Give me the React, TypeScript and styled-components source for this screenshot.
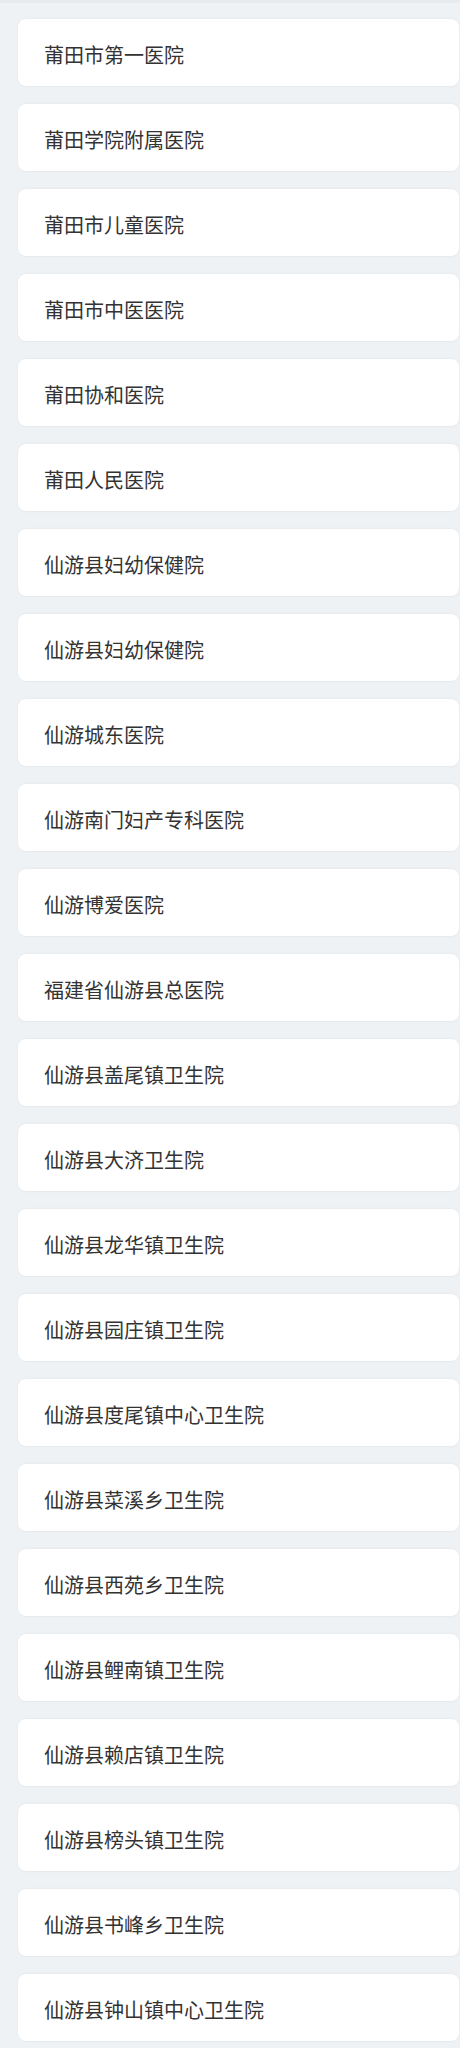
import React from "react";
import styled, { createGlobalStyle } from "styled-components";

const hospitals: string[] = [
    "莆田市第一医院",
    "莆田学院附属医院",
    "莆田市儿童医院",
    "莆田市中医医院",
    "莆田协和医院",
    "莆田人民医院",
    "仙游县妇幼保健院",
    "仙游县妇幼保健院",
    "仙游城东医院",
    "仙游南门妇产专科医院",
    "仙游博爱医院",
    "福建省仙游县总医院",
    "仙游县盖尾镇卫生院",
    "仙游县大济卫生院",
    "仙游县龙华镇卫生院",
    "仙游县园庄镇卫生院",
    "仙游县度尾镇中心卫生院",
    "仙游县菜溪乡卫生院",
    "仙游县西苑乡卫生院",
    "仙游县鲤南镇卫生院",
    "仙游县赖店镇卫生院",
    "仙游县榜头镇卫生院",
    "仙游县书峰乡卫生院",
    "仙游县钟山镇中心卫生院",
];

const GlobalStyle = createGlobalStyle`
    html, body {
        margin: 0;
        padding: 0;
        background: #eef2f5;
    }
    body {
        font-family: "Noto Sans CJK SC", "Noto Sans", sans-serif;
    }
`;

export default function App() {
    return (
        <>
            <GlobalStyle />
            <Page>
                <TopStrip />
                <List>
                    {hospitals.map((name, i) => (
                        <Card key={i}>
                            <Name>{name}</Name>
                        </Card>
                    ))}
                </List>
            </Page>
        </>
    );
}

const Page = styled.div`
    width: 460px;
    min-height: 2048px;
    background: #eef2f5;
`;

const TopStrip = styled.div`
    height: 3px;
    background: #e7ebee;
`;

const List = styled.ul`
    list-style: none;
    margin: 0;
    padding: 16px 1px 0 18px;
    display: flex;
    flex-direction: column;
    gap: 18px;
`;

const Card = styled.li`
    height: 67px;
    box-sizing: border-box;
    background: #ffffff;
    border-radius: 8px;
    box-shadow: 0 -1px 2px rgba(0, 0, 0, 0.03), 0 1px 2px rgba(0, 0, 0, 0.04);
    display: flex;
    align-items: center;
    padding: 5px 0 0 26px;
`;

const Name = styled.span`
    font-size: 20px;
    color: #333333;
    line-height: 1;
`;
